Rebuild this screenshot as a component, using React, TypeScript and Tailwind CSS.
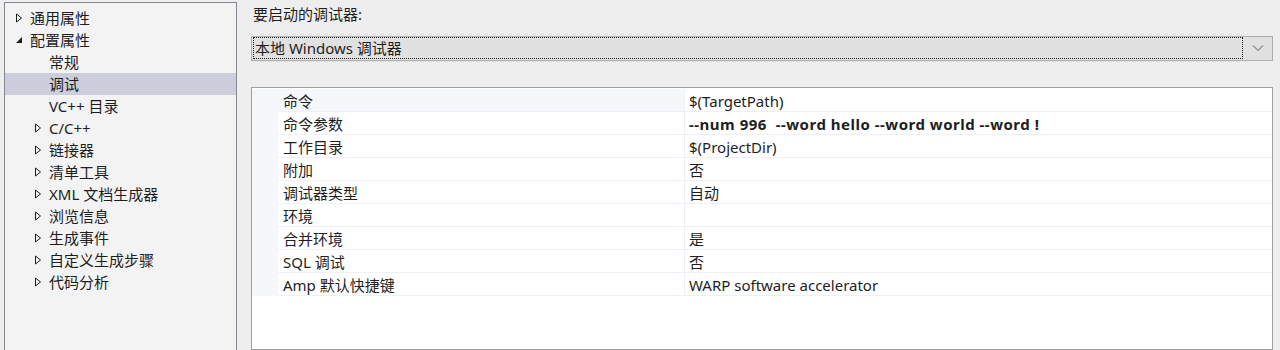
const font = "font-['Noto_Sans','Noto_Sans_CJK_SC',sans-serif]";

type TreeItem = { label: string; level: 0 | 1; arrow?: 'open' | 'closed'; selected?: boolean };

const tree: TreeItem[] = [
  { label: '通用属性', level: 0, arrow: 'closed' },
  { label: '配置属性', level: 0, arrow: 'open' },
  { label: '常规', level: 1 },
  { label: '调试', level: 1, selected: true },
  { label: 'VC++ 目录', level: 1 },
  { label: 'C/C++', level: 1, arrow: 'closed' },
  { label: '链接器', level: 1, arrow: 'closed' },
  { label: '清单工具', level: 1, arrow: 'closed' },
  { label: 'XML 文档生成器', level: 1, arrow: 'closed' },
  { label: '浏览信息', level: 1, arrow: 'closed' },
  { label: '生成事件', level: 1, arrow: 'closed' },
  { label: '自定义生成步骤', level: 1, arrow: 'closed' },
  { label: '代码分析', level: 1, arrow: 'closed' },
];

const props: { name: string; value: string; bold?: boolean }[] = [
  { name: '命令', value: '$(TargetPath)' },
  { name: '命令参数', value: '--num 996  --word hello --word world --word !', bold: true },
  { name: '工作目录', value: '$(ProjectDir)' },
  { name: '附加', value: '否' },
  { name: '调试器类型', value: '自动' },
  { name: '环境', value: '' },
  { name: '合并环境', value: '是' },
  { name: 'SQL 调试', value: '否' },
  { name: 'Amp 默认快捷键', value: 'WARP software accelerator' },
];

function Arrow({ kind }: { kind: 'open' | 'closed' }) {
  if (kind === 'open') {
    return (
      <svg width="8" height="8" viewBox="0 0 8 8" aria-hidden="true">
        <path d="M7 1 L7 7 L1 7 Z" fill="#1e1e1e" />
      </svg>
    );
  }
  return (
    <svg width="8" height="10" viewBox="0 0 8 10" aria-hidden="true">
      <path d="M1.5 1 L6.5 5 L1.5 9 Z" fill="none" stroke="#1e1e1e" strokeWidth="1" />
    </svg>
  );
}

export default function App() {
  return (
    <div className={`flex h-[350px] w-[1280px] overflow-hidden bg-[#eeeeee] text-[15px] text-[#1e1e1e] ${font}`}>
      {/* left tree */}
      <div className="ml-[4px] mt-[2px] h-[360px] w-[233px] shrink-0 border border-[#828790] bg-[#f3f3f3] pt-[4px]">
        {tree.map((item) => (
          <div
            key={item.label}
            className={`flex h-[22px] items-center ${item.selected ? 'bg-[#cccedb]' : ''}`}
          >
            <div className={`flex w-[10px] justify-center ${item.level === 0 ? 'ml-[9px]' : 'ml-[28px]'}`}>
              {item.arrow && <Arrow kind={item.arrow} />}
            </div>
            <span className="ml-[6px]">{item.label}</span>
          </div>
        ))}
      </div>

      {/* right side */}
      <div className="ml-[14px] flex flex-1 flex-col pr-[8px]">
        <div className="mt-[3px] h-[22px] pl-[2px] leading-[22px]">要启动的调试器:</div>
        <div className="mt-[11px] flex h-[28px] items-center border border-[#adadad] bg-[#e1e1e1]">
          <div className="ml-[1px] flex h-[22px] flex-1 items-center border border-dotted border-[#1e1e1e] pl-[1px]">
            本地 Windows 调试器
          </div>
          <div className="flex w-[29px] justify-center">
            <svg width="12" height="8" viewBox="0 0 12 8" aria-hidden="true">
              <path d="M1 1.5 L6 6.5 L11 1.5" fill="none" stroke="#555555" strokeWidth="1" />
            </svg>
          </div>
        </div>

        <div className="mt-[26px] h-[300px] w-[1022px] border border-[#a0a0a0] bg-white pt-[1px]">
          {props.map((p, i) => (
            <div key={p.name} className="flex h-[23px]">
              <div className="w-[26px] bg-[#f5f7fb]" />
              <div
                className={`flex w-[407px] items-center border-b border-r border-[#edf0f6] pl-[5px] pt-[2px] ${i === 0 ? 'bg-[#f5f7fb]' : ''}`}
              >
                {p.name}
              </div>
              <div
                className={`flex flex-1 items-center border-b border-[#edf0f6] pl-[4px] pt-[2px] ${p.bold ? 'font-bold tracking-[0.5px]' : ''}`}
              >
                <span className="whitespace-pre">{p.value}</span>
              </div>
            </div>
          ))}
        </div>
      </div>
    </div>
  );
}
